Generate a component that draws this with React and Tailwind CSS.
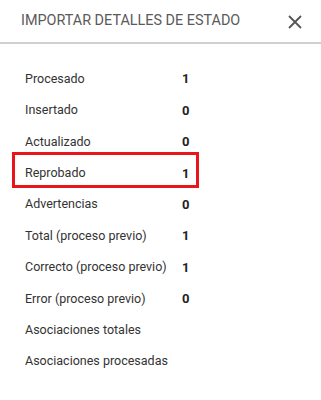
import React from 'react'

const rows = [
  { label: 'Procesado', value: '1' },
  { label: 'Insertado', value: '0' },
  { label: 'Actualizado', value: '0' },
  { label: 'Reprobado', value: '1', highlight: true },
  { label: 'Advertencias', value: '0' },
  { label: 'Total (proceso previo)', value: '1' },
  { label: 'Correcto (proceso previo)', value: '1' },
  { label: 'Error (proceso previo)', value: '0' },
  { label: 'Asociaciones totales', value: '' },
  { label: 'Asociaciones procesadas', value: '' },
]

export default function App() {
  return (
    <div className="w-[321px] h-[400px] bg-white" style={{ fontFamily: 'Roboto, "Liberation Sans", sans-serif' }}>
      {/* header */}
      <div className="h-[44px] flex items-center justify-between pl-[21px] pr-[19px] border-b-2 border-[#d0d0d0]">
        <span className="text-[14.4px] text-[#5a5a5a]">IMPORTAR DETALLES DE ESTADO</span>
        <svg width="14" height="14" viewBox="0 0 14 14" className="mt-[1px]">
          <path d="M1 1 L13 13 M13 1 L1 13" stroke="#555" strokeWidth="1.8" />
        </svg>
      </div>

      <div className="pt-[19.5px]">
        {rows.map((row, i) => (
          <div key={i} className="relative h-[31.4px] flex items-center pl-[25px] text-[12.5px] text-[#333]">
            <span className="w-[157px]">{row.label}</span>
            <span className="font-bold text-[#222] text-[13px]">{row.value}</span>
            {row.highlight && (
              <div className="absolute left-[12px] w-[187px] top-[-5.5px] h-[36px] border-[3px] border-[#e8151b]" />
            )}
          </div>
        ))}
      </div>
    </div>
  )
}
